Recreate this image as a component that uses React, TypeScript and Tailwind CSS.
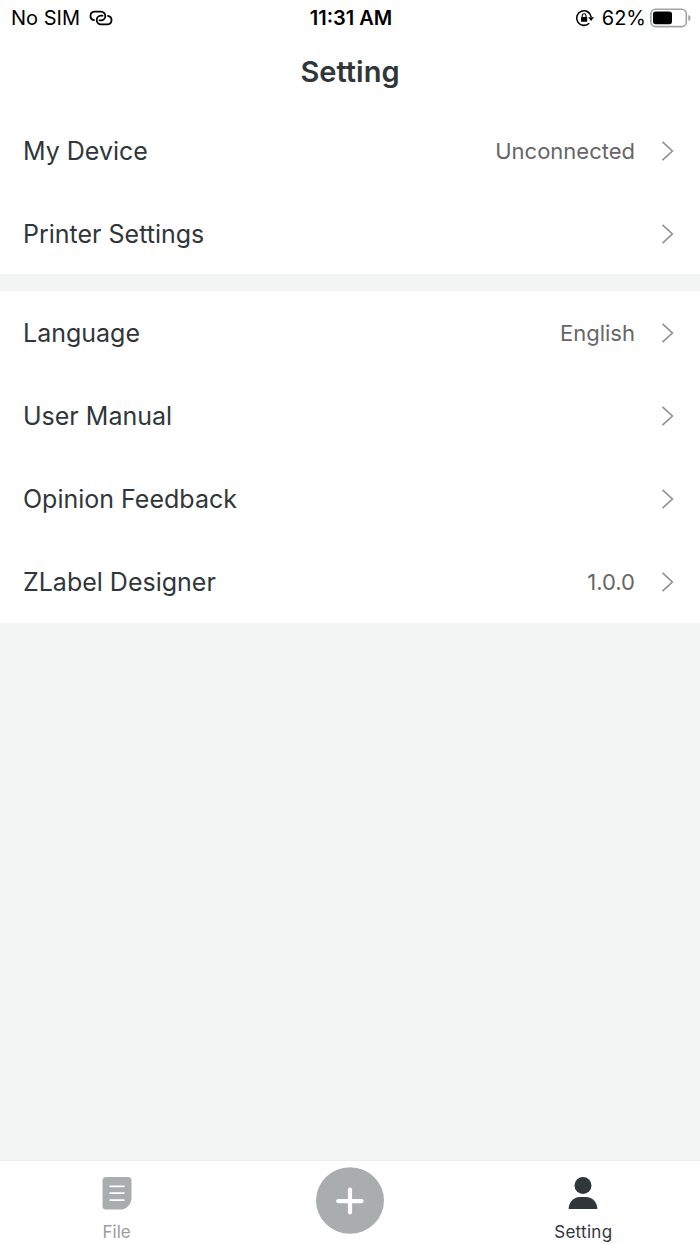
type RowProps = {
  label: string;
  value?: string;
  labelClass?: string;
  valueClass?: string;
};

function StatusBar() {
  return (
    <div className="grid grid-cols-3 items-center h-9 pl-[11px] pr-[9px] text-black">
      <div className="flex items-center gap-[9px]">
        <span className="text-[20px] leading-9">No SIM</span>
        <svg width="24" height="16" viewBox="0 0 24 16" fill="none" stroke="currentColor" strokeWidth="1.8" strokeLinecap="round">
          <path d="M5 10.2A4.3 4.3 0 0 1 5.3 1.7H12A4.3 4.3 0 0 1 12 10.3H10.5" />
          <path d="M19 5.8A4.3 4.3 0 0 1 18.7 14.3H12A4.3 4.3 0 0 1 12 5.7H13.5" />
        </svg>
      </div>
      <span className="text-center text-[20px] leading-9 font-semibold">11:31 AM</span>
      <div className="flex items-center justify-end">
        <svg className="mr-[8px]" width="19" height="18" viewBox="0 0 19 18" fill="none">
          <path d="M14.2 14.2A7.3 7.3 0 1 1 16.2 8" stroke="currentColor" strokeWidth="1.6" />
          <path d="M13.2 8.2H19L16.1 12Z" fill="currentColor" />
          <rect x="6" y="8" width="6.2" height="4.8" rx="0.6" fill="currentColor" />
          <path d="M7.2 8.2V6.7a1.9 1.9 0 0 1 3.8 0V8.2" stroke="currentColor" strokeWidth="1.1" />
        </svg>
        <span className="text-[20px] leading-9">62%</span>
        <svg className="ml-1" width="41" height="20" viewBox="0 0 41 20" fill="none">
          <rect x="0.9" y="1.2" width="35.4" height="17.4" rx="4.6" stroke="#a3a3a3" strokeWidth="1.6" />
          <rect x="3" y="3.5" width="19" height="12.7" rx="2.6" fill="#000" />
          <path d="M38.3 7v6c1.8-.6 2.3-1.8 2.3-3s-.5-2.4-2.3-3Z" fill="#a3a3a3" />
        </svg>
      </div>
    </div>
  );
}

function Row({ label, value, labelClass = "", valueClass = "" }: RowProps) {
  return (
    <li className="flex items-center h-[83px] pl-[23px] pr-[26px]">
      <span className={`text-[25px] leading-[30px] text-[#30373b] ${labelClass}`}>{label}</span>
      <span className={`ml-auto mr-[26px] text-[22px] leading-[30px] text-[#666] ${valueClass}`}>{value}</span>
      <svg width="13" height="20" viewBox="0 0 13 20" fill="none" stroke="#909090" strokeWidth="1.6">
        <path d="M1.5 0.8L11.4 10L1.5 19.2" />
      </svg>
    </li>
  );
}

function TabBar() {
  return (
    <nav className="grid grid-cols-3 h-[84px] bg-white border-t border-[#ebeded]">
      <div className="flex flex-col items-center pt-[16px] text-[#9b9d9e]">
        <svg width="30" height="33" viewBox="0 0 30 33">
          <path d="M4 0H26a3.5 3.5 0 0 1 3.5 3.5V21A11.5 11.5 0 0 1 18 32.5H4A3.5 3.5 0 0 1 .5 29V3.500A3.500 3.500 0 0 1 4 0Z" fill="#a9adae" />
          <path d="M7.500 9.300H22.500M7.500 16.200H22.500M7.500 23.100H22.500" stroke="#fff" strokeWidth="1.8" />
        </svg>
        <span className="mt-[11px] text-[17px] leading-[22px]">File</span>
      </div>
      <div className="flex justify-center pt-[6px]">
        <svg width="68" height="68" viewBox="0 0 68 68">
          <ellipse cx="34" cy="33.500" rx="34" ry="33.300" fill="#a9adae" />
          <path d="M34 22.500V45.500M22.200 34.100H45.600" stroke="#fff" strokeWidth="4.200" strokeLinecap="round" />
        </svg>
      </div>
      <div className="flex flex-col items-center pt-[16px] text-[#30373b]">
        <svg width="30" height="33" viewBox="0 0 30 33" fill="#30373b">
          <circle cx="15" cy="8.500" r="8.500" />
          <path d="M.6 32C.8 25 5.500 20 12 20h6C24.500 20 29.200 25 29.400 32Z" />
        </svg>
        <span className="mt-[11px] text-[17px] leading-[22px] tracking-[0.3px]">Setting</span>
      </div>
    </nav>
  );
}

export default function App() {
  return (
    <div className="flex flex-col w-[700px] h-[1244px] overflow-hidden bg-[#f3f5f5] font-['Inter',sans-serif]">
      <header className="h-[109px] bg-white">
        <StatusBar />
        <h1 className="text-center text-[29px] leading-[72px] font-semibold text-[#30373b]">Setting</h1>
      </header>
      <ul className="h-[165px] bg-white">
        <Row label="My Device" value="Unconnected" />
        <Row label="Printer Settings" />
      </ul>
      <ul className="mt-[17px] bg-white">
        <Row label="Language" value="English" />
        <Row label="User Manual" />
        <Row label="Opinion Feedback" />
        <Row label="ZLabel Designer" value="1.0.0" />
      </ul>
      <div className="flex-1" />
      <TabBar />
    </div>
  );
}
